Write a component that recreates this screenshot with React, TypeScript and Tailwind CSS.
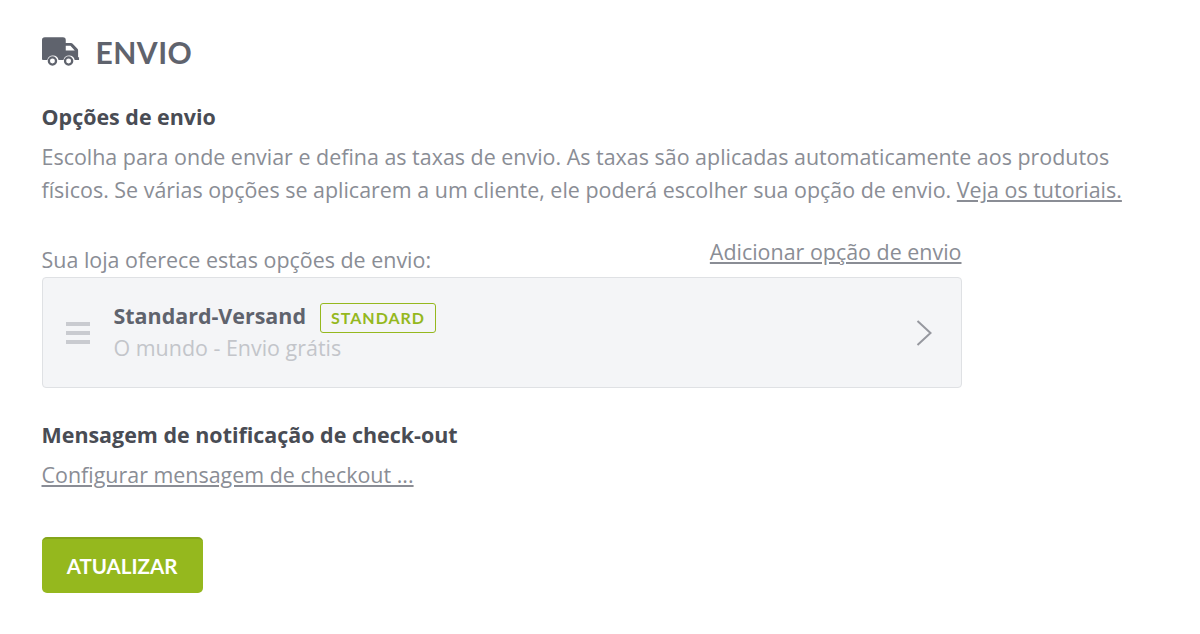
function TruckIcon() {
  return (
    <svg viewBox="0 0 40 32" className="h-[31px] w-[38px] -translate-y-[1px] fill-[#5f636d]" aria-hidden>
      <path d="M3 1h19a3 3 0 0 1 3 3v3h5.5a2.5 2.5 0 0 1 1.8.8l5 5.4a2.5 2.5 0 0 1 .7 1.7V22h1v3h-4.6a6 6 0 0 0-11.8 0h-5.2a6 6 0 0 0-11.8 0H1a1 1 0 0 1-1-1V4a3 3 0 0 1 3-3zm22 9v5h9.5l-4.6-5z" fillRule="evenodd" />
      <path d="M11 21a5 5 0 1 1 0 10 5 5 0 0 1 0-10zm0 2.4a2.6 2.6 0 1 0 0 5.2 2.6 2.6 0 0 0 0-5.2zM28 21a5 5 0 1 1 0 10 5 5 0 0 1 0-10zm0 2.4a2.6 2.6 0 1 0 0 5.2 2.6 2.6 0 0 0 0-5.2z" fillRule="evenodd" />
    </svg>
  );
}

export default function App() {
  return (
    <div className="h-[634px] w-[1200px] overflow-hidden bg-white pl-[41.5px] pt-[35px] font-['Open_Sans',sans-serif] text-[21.45px] text-[#8a8d95]">
      <div className="flex h-[34px] items-center gap-[16px]">
        <TruckIcon />
        <h1 className="font-['Lato',sans-serif] text-[30px] font-bold leading-none tracking-[0.5px] text-[#5f636d]">
          ENVIO
        </h1>
      </div>

      <h2 className="mt-[31px] font-bold leading-[33px] text-[#494c54]">Opções de envio</h2>
      <p className="mt-[7px] w-[1100px] leading-[33px]">
        Escolha para onde enviar e defina as taxas de envio. As taxas são aplicadas automaticamente aos produtos físicos. Se várias opções se aplicarem a um cliente, ele poderá escolher sua opção de envio.{" "}
        <a className="underline">Veja os tutoriais.</a>
      </p>

      <div className="mt-[29px] flex h-[41px] w-[920px] items-start justify-between">
        <span className="pt-[8px] leading-[33px]">Sua loja oferece estas opções de envio:</span>
        <a className="leading-[33px] underline">Adicionar opção de envio</a>
      </div>

      <div className="mt-[1px] flex h-[111px] w-[920.5px] items-center rounded-[4px] border border-[#dfe1e4] bg-[#f4f5f7] pl-[23px] pr-[29px]">
        <div className="flex w-[24px] flex-col gap-[5px]">
          <span className="h-[4px] bg-[#c9cbd0]" />
          <span className="h-[4px] bg-[#c9cbd0]" />
          <span className="h-[4px] bg-[#c9cbd0]" />
        </div>
        <div className="ml-[24px] flex-1 pb-[2px]">
          <div className="flex items-start gap-[14px]">
            <span className="font-bold leading-[30px] text-[#5f636d]">Standard-Versand</span>
            <span className="mt-[2px] rounded-[3px] border border-[#95b81e] px-[10px] font-['Lato',sans-serif] text-[16px] font-bold leading-[28px] tracking-[1px] text-[#95b81e]">
              STANDARD
            </span>
          </div>
          <div className="leading-[30px] text-[#c3c5ca]">O mundo - Envio grátis</div>
        </div>
        <svg viewBox="0 0 16 26" className="h-[26px] w-[16px]" fill="none" stroke="#96989f" strokeWidth={2} aria-hidden>
          <path d="M1.5 1l13 12-13 12" />
        </svg>
      </div>

      <h2 className="mt-[30px] font-bold leading-[33px] text-[#494c54]">Mensagem de notificação de check-out</h2>
      <a className="mt-[7px] block leading-[33px] underline">Configurar mensagem de checkout ...</a>

      <button className="mt-[46px] block h-[56px] w-[161px] rounded-[5px] border-t-2 border-[#84a51a] bg-[#95b81e] text-center font-['Lato',sans-serif] text-[20.5px] font-bold text-white">
        ATUALIZAR
      </button>
    </div>
  );
}
